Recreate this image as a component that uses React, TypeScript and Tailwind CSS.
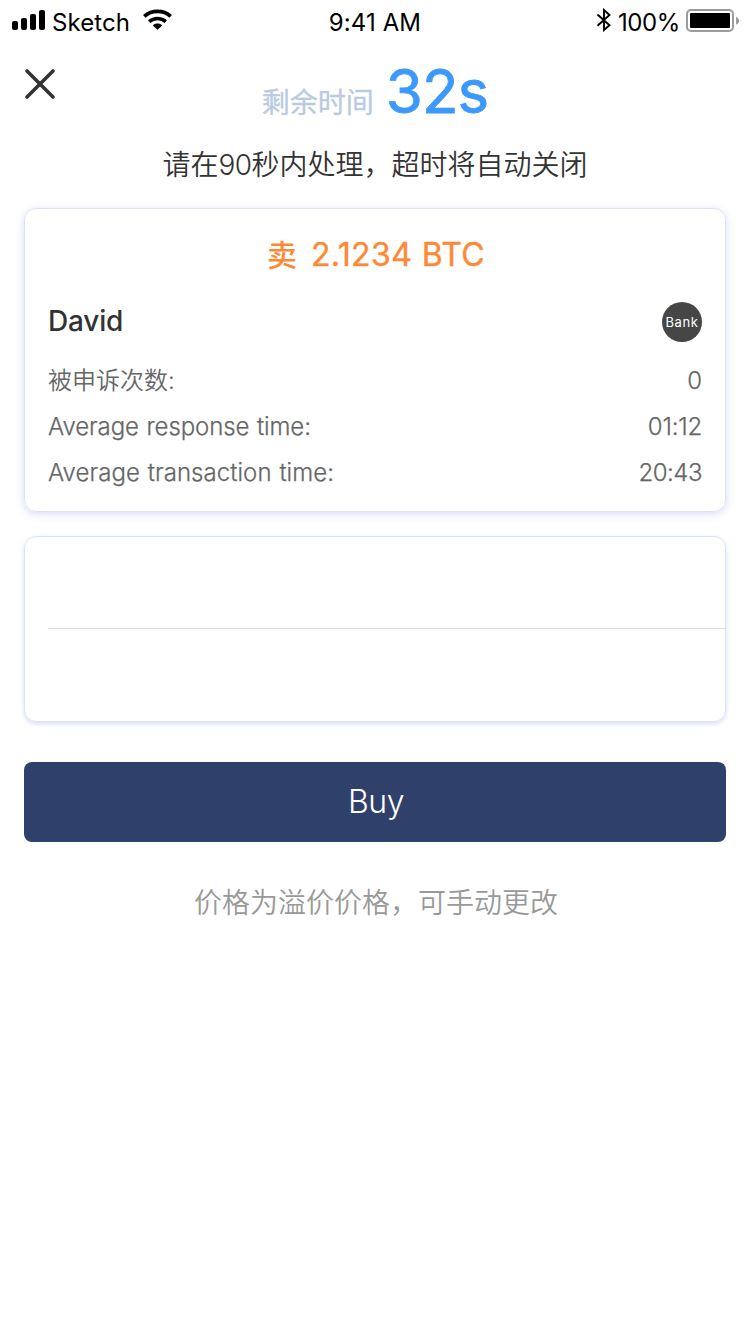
const stats = [
  { label: "被申诉次数:", value: "0", labelClass: "font-[350]", valueClass: "" },
  { label: "Average response time:", value: "01:12", labelClass: "tracking-[-0.1px] [word-spacing:1px] [-webkit-text-stroke:0.25px_#666]", valueClass: "tracking-[-0.2px]" },
  { label: "Average transaction time:", value: "20:43", labelClass: "tracking-[0.06px] [word-spacing:1px] [-webkit-text-stroke:0.25px_#666]", valueClass: "tracking-[-0.5px]" },
];

function Signal() {
  return (
    <svg className="block h-5 w-[34px]" viewBox="0 0 34 20" fill="#000">
      <rect x="0" y="11" width="6" height="9" rx="2" />
      <rect x="9" y="8" width="6" height="12" rx="2" />
      <rect x="18" y="4" width="6" height="16" rx="2" />
      <rect x="27" y="0" width="6" height="20" rx="2" />
    </svg>
  );
}

function Wifi() {
  return (
    <svg className="block h-[21px] w-[29px]" viewBox="0 0 29 21" fill="none" stroke="#000">
      <path d="M1.300 7.300C8.700.7 20.300.7 27.700 7.300" strokeWidth="3.800" />
      <path d="M6.200 12.600c4.800-4.200 11.800-4.200 16.600 0" strokeWidth="3.600" />
      <path d="M9.800 16.400c2.600-2.400 6.800-2.400 9.400 0L14.500 20.800z" fill="#000" stroke="none" />
    </svg>
  );
}

function Bluetooth() {
  return (
    <svg className="block h-6 w-4" viewBox="0 0 16 24" fill="none" stroke="#000" strokeWidth="1.900">
      <path d="M1.500 6.500 13.500 17.300 8 22V2l5.500 5L1.500 17.800" />
    </svg>
  );
}

function Battery() {
  return (
    <svg className="block h-6 w-[54px]" viewBox="0 0 54 24">
      <rect x="1" y="1" width="46" height="21" rx="4" fill="#fff" stroke="#9b9b9b" strokeWidth="2" />
      <rect x="4" y="4" width="40" height="15" rx="1" fill="#000" />
      <path d="M50 8c4 1 4 6.500 0 7.500z" fill="#9b9b9b" />
    </svg>
  );
}

export default function App() {
  return (
    <div className="flex h-[1334px] w-[750px] flex-col overflow-hidden bg-white font-['Inter','Noto_Sans_CJK_SC',sans-serif]">
      <header className="grid h-10 grid-cols-3 text-2xl leading-[46px] text-black">
        <div className="flex pl-3">
          <div className="pt-2.5"><Signal /></div>
          <span className="ml-1.5 tracking-[0.1px]">Sketch</span>
          <div className="ml-[13px] pt-[9px]"><Wifi /></div>
        </div>
        <span className="text-center tracking-[0.1px]">9:41 AM</span>
        <div className="flex justify-end pr-[10px]">
          <div className="pt-2"><Bluetooth /></div>
          <span className="ml-1.5 tracking-[-0.4px]">100%</span>
          <div className="ml-1.5 pt-[9px]"><Battery /></div>
        </div>
      </header>

      <div className="grid h-[84px] grid-cols-[200px_350px_200px]">
        <button className="ml-6 mt-7 h-8 w-8" aria-label="Close">
          <svg className="block h-8 w-8" viewBox="0 0 32 32" stroke="#333" strokeWidth="3.600" strokeLinecap="round">
            <path d="M3 3l26 26M29 3 3 29" />
          </svg>
        </button>
        <div className="flex items-baseline justify-center leading-[102px]">
          <span className="text-[28px] text-[#b9cae2] [-webkit-text-stroke:0.3px_#b9cae2]">剩余时间</span>
          <span className="ml-3 text-[60px] tracking-[-1px] text-[#3c99fc] [-webkit-text-stroke:0.8px_#3c99fc]">32s</span>
        </div>
      </div>

      <p className="h-[84px] pt-[21px] text-center text-[28px] font-[350] leading-[40px] text-[#333]">
        请在<span className="tracking-[-0.5px]">90</span>秒内处理，超时将自动关闭
      </p>

      <main className="px-6">
        <section className="h-[304px] rounded-xl border border-[#dbe3f8] px-[23px] shadow-[0_2px_8px_rgba(70,110,220,0.22)]">
          <h1 className="flex h-[90px] items-baseline justify-center pl-0.5 text-[32px] leading-[92px] text-[#fc8936]">
            <span className="text-[30px] font-medium">卖</span>
            <span className="ml-3.5 tracking-[0.4px] [-webkit-text-stroke:0.4px_#fc8936]">2.1234 BTC</span>
          </h1>
          <div className="flex h-[58px] justify-between">
            <span className="text-[28px] font-medium leading-[44px] tracking-[-0.2px] text-[#333]">David</span>
            <span className="mt-[3px] flex h-10 w-10 items-center justify-center rounded-full bg-[#464646] pt-px text-[13px] tracking-[0.6px] text-white">
              Bank
            </span>
          </div>
          <dl className="pt-px">
            {stats.map((s) => (
              <div key={s.label} className="flex h-[46px] justify-between text-2xl font-light leading-[45px] text-[#666]">
                <dt className={s.labelClass}>{s.label}</dt>
                <dd className={`[-webkit-text-stroke:0.25px_#666] ${s.valueClass}`}>{s.value}</dd>
              </div>
            ))}
          </dl>
        </section>

        <section className="mt-6 h-[186px] rounded-xl border border-[#dbe3f8] pl-[23px] shadow-[0_2px_4px_rgba(70,110,220,0.22)]">
          <div className="-mr-px h-[92px] border-b border-[#dcdcdc]" />
        </section>

        <button className="mt-10 block h-20 w-full rounded-lg bg-[#2f406b] pl-0.5 text-[32px] font-light tracking-[-0.4px] text-white">
          Buy
        </button>
        <p className="mt-[41px] pl-0.5 text-center text-[28px] font-[350] leading-[40px] text-[#999]">
          价格为溢价价格，可手动更改
        </p>
      </main>
    </div>
  );
}
